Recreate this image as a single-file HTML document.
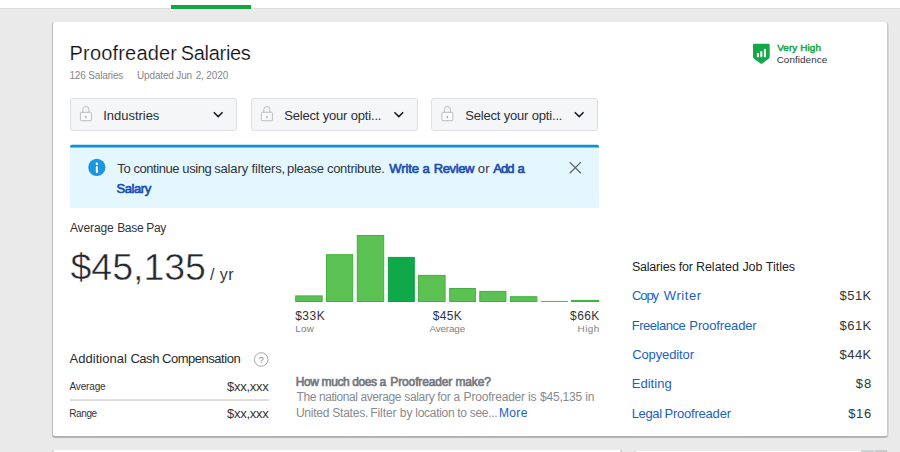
<!DOCTYPE html>
<html>
<head>
<meta charset="utf-8">
<title>Proofreader Salaries</title>
<style>
html,body{margin:0;padding:0;}
body{width:900px;height:452px;overflow:hidden;background:#eaeaea;position:relative;font-family:"Liberation Sans",sans-serif;}
.abs{position:absolute;}
.t{position:absolute;white-space:pre;line-height:1;font-family:"Liberation Sans",sans-serif;}
.topbar{left:0;top:0;width:900px;height:8px;background:#fff;border-bottom:1px solid #dcdcdc;}
.tab{left:171px;top:5px;width:80px;height:3.5px;background:#0caa41;}
.tabw{left:171px;top:8.5px;width:80px;height:1.5px;background:#fff;}
.card{left:53px;top:22px;width:834px;height:414px;background:#fff;border-radius:2px;box-shadow:-1px 0 0 #bdbdbd,1.3px 0 0 #cdcdcd,0 1.7px 0 #b3b3b3,-1px 1.7px 0 #b8b8b8,1.3px 1.7px 0 #c0c0c0;}
.card2{left:53px;top:449.7px;width:568px;height:10px;background:#fff;border-radius:2px;box-shadow:-1px 0 0 #bdbdbd,1.3px 0 0 #c4c4c4;}
.card3{left:634.7px;top:450.5px;width:226.3px;height:10px;background:#fff;border-radius:2px 0 0 0;box-shadow:-1px 0 0 #c4c4c4;}
.sb1{left:861px;top:450px;width:12.5px;height:4px;background:#cfd2d3;}
.sb2{left:875px;top:450px;width:12px;height:4px;background:#c9c9c9;}
.dd{top:98px;width:164.6px;height:31px;background:#f5f6f7;border:1px solid #dddfe2;border-radius:3px;}
.banner{left:70px;top:146px;width:529px;height:62px;background:#e4f6fe;border-radius:2px;}
.hr{left:70px;top:399px;width:198.5px;height:2px;background:linear-gradient(#e4e4e4,#d7d7d7);}
</style>
</head>
<body>
<div class="abs topbar"></div>
<div class="abs tabw"></div>
<div class="abs tab"></div>
<div class="abs card"></div>
<div class="abs card2"></div>
<div class="abs card3"></div>
<div class="abs sb1"></div>
<div class="abs sb2"></div>

<!-- dropdowns -->
<div class="abs dd" style="left:70px"></div>
<div class="abs dd" style="left:251px"></div>
<div class="abs dd" style="left:431.4px;width:165px"></div>
<svg class="abs" style="left:0;top:0" width="900" height="452" viewBox="0 0 900 452">
  <!-- lock icons -->
  <g id="lock" fill="none" stroke="#bbbdc0" stroke-width="1">
    <rect x="80.4" y="112.3" width="11" height="8.4" rx="0.8" fill="#fafafb"/>
    <path d="M82.8 112.3v-2.8a3.05 3.05 0 0 1 6.1 0v2.8"/>
    <path d="M85.9 116.1v2.1" stroke="#a3a6aa" stroke-width="1.2"/>
  </g>
  <use href="#lock" x="181"/>
  <use href="#lock" x="361.5"/>
  <!-- chevrons -->
  <g id="chev" fill="none" stroke="#15181d" stroke-width="1.45" stroke-linecap="butt" stroke-linejoin="miter">
    <path d="M213.8 112.2l4.4 4.4 4.4-4.4"/>
  </g>
  <use href="#chev" x="180.6"/>
  <use href="#chev" x="361"/>
</svg>

<!-- banner -->
<div class="abs banner"></div>
<svg class="abs" style="left:0;top:0" width="900" height="452" viewBox="0 0 900 452">
  <path d="M70 147.6V146.7a2 2 0 0 1 2-2H597a2 2 0 0 1 2 2V147.6z" fill="#0b92d4"/>
  <circle cx="96.8" cy="167.4" r="8.6" fill="#1c96de"/>
  <rect x="95.85" y="166" width="1.95" height="7" rx="0.9" fill="#fff"/>
  <circle cx="96.85" cy="163.8" r="1.2" fill="#fff"/>
  <path d="M569.7 162.1L580.9 173.2M580.9 162.1L569.7 173.2" stroke="#5f6570" stroke-width="1.3" fill="none"/>
  <!-- help icon -->
  <circle cx="261.2" cy="359.5" r="6.8" fill="#fff" stroke="#a6a8ac" stroke-width="1"/>
  <!-- shield -->
  <path d="M754.3 43.8H768.4A1.3 1.3 0 0 1 769.7 45.1V56.8A2.4 2.4 0 0 1 768.7 58.7L762.2 63.5A1.4 1.4 0 0 1 760.5 63.5L754 58.7A2.4 2.4 0 0 1 753 56.8V45.1A1.3 1.3 0 0 1 754.3 43.8Z" fill="#12a848"/>
  <rect x="756.9" y="53" width="1.95" height="4.2" fill="#fff"/>
  <rect x="760.3" y="51.3" width="2" height="5.9" fill="#fff"/>
  <rect x="763.9" y="48.9" width="2" height="8.3" fill="#fff"/>
</svg>
<span class="t" style="left:258.7px;top:356px;font-size:9px;color:#7a8290;">?</span>

<!-- histogram -->
<svg class="abs" style="left:0;top:0" width="900" height="452" viewBox="0 0 900 452">
  <rect x="295.70" y="295.90" width="26.50" height="5.60" fill="#5cc153" stroke="#40b23d" stroke-width="1"/>
  <rect x="326.50" y="254.70" width="26.20" height="46.80" fill="#5cc153" stroke="#40b23d" stroke-width="1"/>
  <rect x="357.30" y="235.50" width="26.40" height="66.00" fill="#5cc153" stroke="#40b23d" stroke-width="1"/>
  <rect x="388.40" y="257.40" width="25.90" height="44.10" fill="#10a94a" stroke="#0a9e43" stroke-width="1"/>
  <rect x="418.40" y="275.40" width="26.70" height="26.10" fill="#5cc153" stroke="#40b23d" stroke-width="1"/>
  <rect x="449.70" y="288.50" width="25.70" height="13.00" fill="#5cc153" stroke="#40b23d" stroke-width="1"/>
  <rect x="479.80" y="291.40" width="26.10" height="10.10" fill="#5cc153" stroke="#40b23d" stroke-width="1"/>
  <rect x="510.40" y="296.70" width="26.50" height="4.80" fill="#5cc153" stroke="#40b23d" stroke-width="1"/>
  <rect x="540.9" y="300.9" width="27.1" height="1.1" fill="#55bf50"/>
  <rect x="570.9" y="299.9" width="28.4" height="2.1" fill="#3fb540"/>
</svg>

<div class="abs hr"></div>

<span class="t" style="left:69.52px;top:43.00px;font-size:20px;color:#0c1016;letter-spacing:0.184px;-webkit-text-stroke:0.2px #fff;">Proofreader</span>
<span class="t" style="left:180.69px;top:43.00px;font-size:20px;color:#0c1016;letter-spacing:-0.297px;-webkit-text-stroke:0.2px #fff;">Salaries</span>
<span class="t" style="left:69.42px;top:71.00px;font-size:10px;color:#868686;letter-spacing:-0.154px;">126 Salaries</span>
<span class="t" style="left:137.03px;top:71.00px;font-size:10px;color:#868686;letter-spacing:-0.156px;">Updated Jun</span>
<span class="t" style="left:195.63px;top:71.00px;font-size:10px;color:#868686;letter-spacing:-0.130px;">2, 2020</span>
<span class="t" style="left:103.28px;top:109.00px;font-size:13px;color:#2b2f36;letter-spacing:-0.033px;">Industries</span>
<span class="t" style="left:284.15px;top:109.00px;font-size:13px;color:#2b2f36;letter-spacing:-0.172px;">Select your opti...</span>
<span class="t" style="left:465.15px;top:109.00px;font-size:13px;color:#2b2f36;letter-spacing:-0.172px;">Select your opti...</span>
<span class="t" style="left:117.30px;top:162.00px;font-size:13px;color:#30343a;letter-spacing:-0.420px;">To continue using</span>
<span class="t" style="left:214.13px;top:162.00px;font-size:13px;color:#30343a;letter-spacing:-0.135px;">salary filters,</span>
<span class="t" style="left:286.99px;top:162.00px;font-size:13px;color:#30343a;letter-spacing:-0.280px;">please contribute.</span>
<span class="t" style="left:389.16px;top:162.00px;font-size:13px;color:#1a4db3;letter-spacing:-0.043px;-webkit-text-stroke:0.65px #1a4db3;">Write a</span>
<span class="t" style="left:433.77px;top:162.00px;font-size:13px;color:#1a4db3;letter-spacing:-0.391px;-webkit-text-stroke:0.65px #1a4db3;">Review</span>
<span class="t" style="left:477.65px;top:162.00px;font-size:13px;color:#30343a;letter-spacing:0.437px;">or</span>
<span class="t" style="left:493.28px;top:162.00px;font-size:13px;color:#1a4db3;letter-spacing:-0.943px;-webkit-text-stroke:0.65px #1a4db3;">Add</span>
<span class="t" style="left:517.61px;top:162.00px;font-size:13px;color:#1a4db3;letter-spacing:0.000px;-webkit-text-stroke:0.65px #1a4db3;">a</span>
<span class="t" style="left:116.58px;top:182.00px;font-size:13px;color:#1a4db3;letter-spacing:-0.440px;-webkit-text-stroke:0.65px #1a4db3;">Salary</span>
<span class="t" style="left:69.91px;top:222.00px;font-size:12px;color:#30343b;letter-spacing:-0.101px;">Average</span>
<span class="t" style="left:117.19px;top:222.00px;font-size:12px;color:#30343b;letter-spacing:-0.328px;">Base Pay</span>
<span class="t" style="left:70.50px;top:249.00px;font-size:37.5px;color:#23272e;letter-spacing:-0.019px;-webkit-text-stroke:0.5px #fff;">$45,135</span>
<span class="t" style="left:210.00px;top:267.00px;font-size:16px;color:#30343b;letter-spacing:0.469px;">/ yr</span>
<span class="t" style="left:295.13px;top:310.00px;font-size:12px;color:#30343b;letter-spacing:0.506px;">$33K</span>
<span class="t" style="left:295.23px;top:324.00px;font-size:9.9px;color:#808080;letter-spacing:0.281px;">Low</span>
<span class="t" style="left:432.78px;top:310.00px;font-size:12px;color:#30343b;letter-spacing:0.291px;">$45K</span>
<span class="t" style="left:429.44px;top:324.00px;font-size:9.9px;color:#808080;letter-spacing:-0.147px;">Average</span>
<span class="t" style="left:570.11px;top:310.00px;font-size:12px;color:#30343b;letter-spacing:0.378px;">$66K</span>
<span class="t" style="left:577.62px;top:324.00px;font-size:9.9px;color:#808080;letter-spacing:0.415px;">High</span>
<span class="t" style="left:69.59px;top:352.00px;font-size:13px;color:#272b31;letter-spacing:0.026px;">Additional</span>
<span class="t" style="left:130.45px;top:352.00px;font-size:13px;color:#272b31;letter-spacing:-0.473px;">Cash Compensation</span>
<span class="t" style="left:69.55px;top:382.00px;font-size:10px;color:#30343b;letter-spacing:-0.164px;">Average</span>
<span class="t" style="left:227.08px;top:380.00px;font-size:13px;color:#30343b;letter-spacing:-0.295px;">$xx,xxx</span>
<span class="t" style="left:69.23px;top:409.00px;font-size:10px;color:#30343b;letter-spacing:-0.379px;">Range</span>
<span class="t" style="left:227.08px;top:407.00px;font-size:13px;color:#30343b;letter-spacing:-0.295px;">$xx,xxx</span>
<span class="t" style="left:295.77px;top:376.00px;font-size:12px;color:#73777e;letter-spacing:-0.394px;-webkit-text-stroke:0.65px #73777e;">How much does a</span>
<span class="t" style="left:390.35px;top:376.00px;font-size:12px;color:#73777e;letter-spacing:-0.139px;-webkit-text-stroke:0.65px #73777e;">Proofreader make?</span>
<span class="t" style="left:296.60px;top:391.00px;font-size:12px;color:#858a90;letter-spacing:-0.422px;">The national average</span>
<span class="t" style="left:404.24px;top:391.00px;font-size:12px;color:#858a90;letter-spacing:-0.318px;">salary for a</span>
<span class="t" style="left:463.58px;top:391.00px;font-size:12px;color:#858a90;letter-spacing:-0.184px;">Proofreader is</span>
<span class="t" style="left:539.93px;top:391.00px;font-size:12px;color:#858a90;letter-spacing:-0.177px;">$45,135 in</span>
<span class="t" style="left:295.91px;top:407.00px;font-size:12px;color:#858a90;letter-spacing:-0.233px;">United States.</span>
<span class="t" style="left:370.25px;top:407.00px;font-size:12px;color:#858a90;letter-spacing:-0.062px;">Filter by</span>
<span class="t" style="left:415.37px;top:407.00px;font-size:12px;color:#858a90;letter-spacing:-0.305px;">location to see...</span>
<span class="t" style="left:498.97px;top:407.00px;font-size:12px;color:#1861bf;letter-spacing:0.362px;">More</span>
<span class="t" style="left:631.93px;top:261.00px;font-size:12.5px;color:#1f2329;letter-spacing:-0.206px;">Salaries for</span>
<span class="t" style="left:695.92px;top:261.00px;font-size:12.5px;color:#1f2329;letter-spacing:-0.010px;">Related Job Titles</span>
<span class="t" style="left:632.05px;top:289.00px;font-size:13px;color:#1b5fc0;letter-spacing:-1.099px;">Copy</span>
<span class="t" style="left:663.86px;top:289.00px;font-size:13px;color:#1b5fc0;letter-spacing:0.539px;">Writer</span>
<span class="t" style="left:839.59px;top:289.00px;font-size:13px;color:#30343b;letter-spacing:0.420px;">$51K</span>
<span class="t" style="left:631.67px;top:319.00px;font-size:13px;color:#1b5fc0;letter-spacing:-0.464px;">Freelance</span>
<span class="t" style="left:689.35px;top:319.00px;font-size:13px;color:#1b5fc0;letter-spacing:-0.131px;">Proofreader</span>
<span class="t" style="left:839.59px;top:319.00px;font-size:13px;color:#30343b;letter-spacing:0.420px;">$61K</span>
<span class="t" style="left:632.13px;top:348.00px;font-size:13px;color:#1b5fc0;letter-spacing:-0.113px;">Copyeditor</span>
<span class="t" style="left:839.59px;top:348.00px;font-size:13px;color:#30343b;letter-spacing:0.420px;">$44K</span>
<span class="t" style="left:631.73px;top:377.00px;font-size:13px;color:#1b5fc0;letter-spacing:0.025px;">Editing</span>
<span class="t" style="left:855.75px;top:377.00px;font-size:13px;color:#30343b;letter-spacing:0.961px;">$8</span>
<span class="t" style="left:631.67px;top:407.00px;font-size:13px;color:#1b5fc0;letter-spacing:-0.342px;">Legal</span>
<span class="t" style="left:664.48px;top:407.00px;font-size:13px;color:#1b5fc0;letter-spacing:-0.214px;">Proofreader</span>
<span class="t" style="left:848.20px;top:407.00px;font-size:13px;color:#30343b;letter-spacing:0.684px;">$16</span>
<span class="t" style="left:777.13px;top:43.00px;font-size:9.9px;color:#14a849;letter-spacing:0.128px;-webkit-text-stroke:0.5px #14a849;">Very High</span>
<span class="t" style="left:776.68px;top:55.00px;font-size:9.9px;color:#2e3238;letter-spacing:0.062px;">Confidence</span>
</body>
</html>
